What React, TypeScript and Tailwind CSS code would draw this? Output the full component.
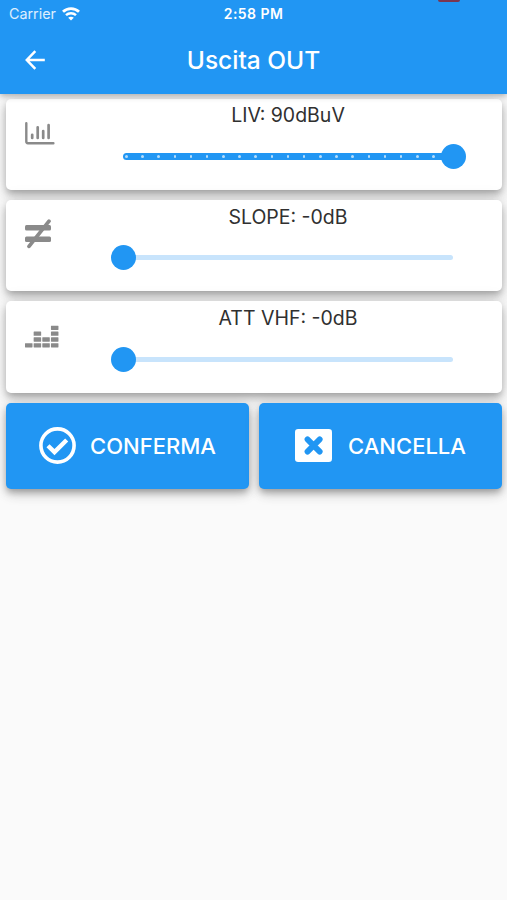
import type { ReactNode } from "react";

const SLIDER_STEPS = 20;

function WifiIcon() {
  return (
    <svg width="18" height="14" viewBox="0 0 18 14" fill="none" stroke="white">
      <path d="M1 4.8C5.4 0.6 12.6 0.6 17 4.8" strokeWidth="2.8" />
      <path d="M4 8.2C6.8 5.6 11.2 5.6 14 8.2" strokeWidth="2.5" />
      <path d="M9 13.6L6.2 10.8C7.6 9.4 10.4 9.4 11.8 10.8Z" fill="white" stroke="none" />
    </svg>
  );
}

function BackIcon() {
  return (
    <svg width="20" height="20" viewBox="0 0 20 20" fill="none" stroke="white" strokeWidth="2.5">
      <path d="M10.3 1.2L1.8 10L10.3 18.8M2 10H19.8" />
    </svg>
  );
}

function ChartIcon() {
  return (
    <svg width="30" height="23" viewBox="0 0 30 23" fill="none" stroke="#8a8a8a" strokeLinecap="round">
      <path d="M1.3 1.2V19.6Q1.3 21.2 2.9 21.2H28.4" strokeWidth="2.4" />
      <path d="M7.2 12.8V16M12.7 5.3V16M18.2 9V16M23.6 3.2V16" strokeWidth="2.7" />
    </svg>
  );
}

function NotEqualIcon() {
  return (
    <svg width="26" height="30" viewBox="0 0 26 30" fill="#8a8a8a">
      <rect x="0" y="6" width="26" height="5.5" rx="1.5" />
      <rect x="0" y="17.4" width="26" height="5.5" rx="1.5" />
      <path d="M4 27.4L24 2.2" stroke="#8a8a8a" strokeWidth="3.7" strokeLinecap="round" />
    </svg>
  );
}

function EqualizerIcon() {
  const columns = [1, 3, 2, 4];
  return (
    <svg width="34" height="23" viewBox="0 0 34 23" fill="#8a8a8a">
      {columns.map((count, col) =>
        Array.from({ length: count }, (_, row) => (
          <rect key={`${col}-${row}`} x={col * 8.65} y={18.2 - row * 5.85} width="7.5" height="4.3" rx="0.4" />
        ))
      )}
    </svg>
  );
}

function CheckIcon() {
  return (
    <svg width="37" height="37" viewBox="0 0 37 37" fill="none" stroke="white">
      <circle cx="18.5" cy="18.5" r="16.6" strokeWidth="3.6" />
      <path d="M9 18.7L15.5 25.1L27.7 13" strokeWidth="4.4" />
    </svg>
  );
}

function CloseIcon() {
  return (
    <svg width="37" height="33" viewBox="0 0 37 33">
      <rect width="37" height="33" rx="3.2" fill="white" />
      <path
        d="M12.5 10.4L24.7 22.6M24.7 10.4L12.5 22.6"
        stroke="#2196f3"
        strokeWidth="5.8"
        strokeLinecap="round"
      />
    </svg>
  );
}

function Slider({ full = false }: { full?: boolean }) {
  return (
    <div className="relative flex h-[25px] w-[330px] items-center">
      {full ? (
        <div className="flex h-[7.5px] w-full items-center justify-between rounded-full bg-[#2196f3] px-[2px]">
          {Array.from({ length: SLIDER_STEPS + 1 }, (_, i) => (
            <span key={i} className="size-[2.5px] rounded-full bg-[#b5dcfb]" />
          ))}
        </div>
      ) : (
        <div className="h-[5px] w-full rounded-full bg-[#c8e4fc]" />
      )}
      <div
        className={`absolute top-0 size-[25px] rounded-full bg-[#2196f3] ${full ? "-right-[12.5px]" : "-left-[12.5px]"}`}
      />
    </div>
  );
}

function SettingCard({ icon, label, full }: { icon: ReactNode; label: string; full?: boolean }) {
  return (
    <section className="flex h-[91.5px] rounded-[5px] bg-white shadow-[0_4px_6px_-1px_rgba(0,0,0,0.2),0_6px_12px_rgba(0,0,0,0.14),0_1px_18px_rgba(0,0,0,0.12)]">
      <div className="w-[117px] shrink-0 pl-[19.3px]">{icon}</div>
      <div className="flex w-[330px] flex-col items-center">
        <div className="flex h-[45.3px] items-start pt-[4.8px] text-[19.5px] leading-[25px] whitespace-nowrap text-[#303030]">
          {label}
        </div>
        <Slider full={full} />
      </div>
    </section>
  );
}

function ActionButton({ icon, children }: { icon: ReactNode; children: ReactNode }) {
  return (
    <button className="flex h-[86px] flex-1 items-center justify-center rounded-[5px] bg-[#2196f3] text-[22px] font-medium text-white shadow-[0_4px_6px_-1px_rgba(0,0,0,0.25),0_6px_12px_rgba(0,0,0,0.14),0_1px_16px_rgba(0,0,0,0.1)]">
      {icon}
      <span className="pt-px">{children}</span>
    </button>
  );
}

export default function App() {
  return (
    <div className="h-[900px] w-[507px] overflow-hidden bg-[#fafafa] font-['Inter',sans-serif]">
      <header className="relative z-10 h-[94px] bg-[#2196f3] text-white shadow-[0_2px_6px_rgba(0,0,0,0.3)]">
        <div className="absolute top-0 left-[438px] h-[2px] w-[22px] rounded-b-sm bg-[#7b3650]" />
        <div className="grid h-[27px] grid-cols-3 items-center">
          <div className="flex items-center gap-[6px] pl-[9px] text-[14.3px] text-white/85">
            <span>Carrier</span>
            <WifiIcon />
          </div>
          <div className="text-center text-[14px] leading-5 font-semibold tracking-[0.45px]">2:58 PM</div>
        </div>
        <div className="grid h-[66px] grid-cols-[1fr_auto_1fr] items-center">
          <div className="pl-[25px]">
            <BackIcon />
          </div>
          <h1 className="text-[24.5px] font-medium">Uscita OUT</h1>
        </div>
      </header>

      <main className="flex flex-col gap-[9.9px] pt-[4.6px] pr-[5px] pl-[6px]">
        <SettingCard icon={<div className="pt-[23px]"><ChartIcon /></div>} label="LIV: 90dBuV" full />
        <SettingCard icon={<div className="pt-[19.5px]"><NotEqualIcon /></div>} label="SLOPE: -0dB" />
        <SettingCard icon={<div className="pt-[23.5px]"><EqualizerIcon /></div>} label="ATT VHF: -0dB" />
        <div className="flex gap-[10px]">
          <ActionButton icon={<div className="mr-[14px]"><CheckIcon /></div>}>CONFERMA</ActionButton>
          <ActionButton icon={<div className="mr-4"><CloseIcon /></div>}>CANCELLA</ActionButton>
        </div>
      </main>
    </div>
  );
}
